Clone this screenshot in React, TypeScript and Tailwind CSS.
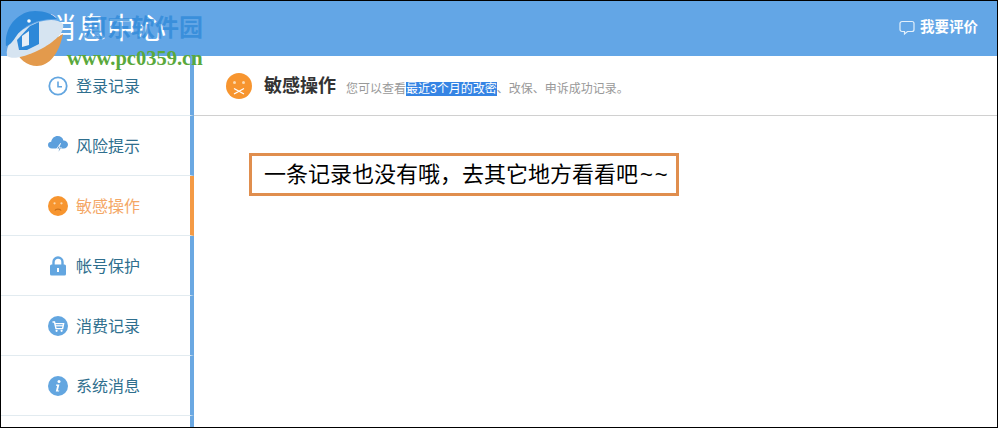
import React from 'react';

const FONT = "font-['Liberation_Sans','Noto_Sans_CJK_SC',sans-serif]";

const ClockIcon = () => (
  <svg width="20" height="20" viewBox="0 0 20 20" fill="none" stroke="#63a6e0">
    <circle cx="10" cy="10" r="8.7" strokeWidth="1.8" />
    <path d="M10 5.5V10.8H14" strokeWidth="1.6" />
  </svg>
);

const CloudIcon = () => (
  <svg width="20" height="22" viewBox="0 0 20 22">
    <path d="M4 13.5C1.8 13.5 0 12 0 10S1.6 6.8 3.2 6.8C3.8 3.4 6.4 1 9.6 1c3 0 5.2 1.8 5.8 4.4C18 5.4 20 7.2 20 9.6s-1.9 3.9-4.2 3.9Z" fill="#5c9fdc" />
    <path d="M12.4 8 8 14.2h2.6L8.6 20l5.4-7.4h-2.6l1.6-4.6Z" fill="#fff" />
    <path d="M11.6 10.2 9.4 13.4h2.2l-1.2 3.4 2.4-3.6h-2.2Z" fill="#3a7fbe" />
  </svg>
);

const SadFace = ({ size, scissors }: { size: number; scissors?: boolean }) => (
  <svg width={size} height={size} viewBox="0 0 26 26">
    <circle cx="13" cy="13" r="13" fill="#f7952f" />
    <circle cx="8.5" cy="9.5" r="1.5" fill="#fbd9ae" />
    <circle cx="17.5" cy="9.5" r="1.5" fill="#fbd9ae" />
    {scissors ? (
      <path d="M8 15.5 18 21M18 15.5 8 21" stroke="#fff" strokeWidth="1.3" fill="none" />
    ) : (
      <path d="M9 19c1-2.4 7-2.4 8 0" stroke="#c96f18" strokeWidth="1.6" fill="none" />
    )}
  </svg>
);

const LockIcon = () => (
  <svg width="18" height="20" viewBox="0 0 18 20">
    <path d="M4.5 9V6a4.5 4.5 0 0 1 9 0v3" stroke="#63a6e0" strokeWidth="2.4" fill="none" />
    <rect x="1" y="8.5" width="16" height="11" rx="1.5" fill="#63a6e0" />
    <rect x="8" y="12" width="2" height="4" fill="#fff" />
  </svg>
);

const CartIcon = () => (
  <svg width="20" height="20" viewBox="0 0 20 20">
    <circle cx="10" cy="10" r="10" fill="#63a6e0" />
    <path d="M4.5 6H6.5L8 12.6H14.6L15.6 7.6H7" stroke="#fff" strokeWidth="1.4" fill="none" />
    <path d="M7.3 9.8H15" stroke="#fff" strokeWidth="1.2" />
    <circle cx="8.6" cy="14.8" r="1.1" fill="#fff" />
    <circle cx="13.6" cy="14.8" r="1.1" fill="#fff" />
  </svg>
);

const InfoIcon = () => (
  <svg width="20" height="20" viewBox="0 0 20 20">
    <circle cx="10" cy="10" r="10" fill="#63a6e0" />
    <circle cx="11" cy="5.6" r="1.5" fill="#fff" />
    <path d="M8.2 8.6H11.4L9.9 14.4H11.4L11 15.6H7.8L9.2 9.8H7.9Z" fill="#fff" />
  </svg>
);

const CommentIcon = () => (
  <svg width="16" height="16" viewBox="0 0 16 16" fill="none" stroke="#e3f0fb" strokeWidth="1.2">
    <path d="M3 1.5H13A2 2 0 0 1 15 3.5V9.5A2 2 0 0 1 13 11.5H8.5L5.5 14V11.5H3A2 2 0 0 1 1 9.5V3.5A2 2 0 0 1 3 1.5Z" />
  </svg>
);

const LogoMark = () => (
  <svg width="60" height="56" viewBox="0 0 60 56">
    <path d="M8 36C14 50 22 56 32 56C44 56 54 44 58 24L34 38Z" fill="#e39a4c" />
    <path d="M2 46C0 36 8 24 24 16C38 9 52 8 58 14C60 22 50 32 34 40C20 47 7 50 2 46Z" fill="#d6e4f1" />
    <path d="M1 36C-1 16 14 1 30 1C40 1 48 4 52 9C36 8 18 14 10 28C7 33 3 36 1 36Z" fill="#2d88d8" />
    <path d="M12 30 25 16 34 12V34L22 40H14Z" fill="#2d88d8" />
    <path d="M17 26 24 21V35L17 37Z" fill="#e6eef6" />
    <circle cx="24" cy="11" r="1.8" fill="#fff" />
  </svg>
);

const menu = [
  { label: '登录记录', icon: <ClockIcon /> },
  { label: '风险提示', icon: <CloudIcon /> },
  { label: '敏感操作', icon: <SadFace size={20} />, active: true },
  { label: '帐号保护', icon: <LockIcon /> },
  { label: '消费记录', icon: <CartIcon /> },
  { label: '系统消息', icon: <InfoIcon /> },
];

export default function App() {
  return (
    <div className={`${FONT} relative w-[998px] h-[428px] overflow-hidden bg-white border border-black flex flex-col`}>
      {/* header */}
      <div className="h-[55px] shrink-0 bg-[#63a6e6] flex items-center justify-between pl-[46px] pr-[19px]">
        <span className="text-[29px] leading-none text-white tracking-[1px] mt-[1px]">消息中心</span>
        <div className="flex items-center gap-[5px] text-white text-[14.5px] font-bold -mt-[2px]">
          <CommentIcon />
          <span>我要评价</span>
        </div>
      </div>

      <div className="flex-1 flex min-h-0">
        {/* sidebar */}
        <div className="w-[193px] shrink-0 flex flex-col">
          {menu.map((item) => (
            <div
              key={item.label}
              className={`h-[60px] shrink-0 flex items-center pl-[47px] gap-[8px] border-b border-[#e2ebf0] border-r-4 ${
                item.active ? 'border-r-[#f49a45]' : 'border-r-[#6ba8e2]'
              }`}
            >
              <span className="w-[20px] flex justify-center">{item.icon}</span>
              <span className={`text-[16px] mt-[2px] ${item.active ? 'text-[#f4a766]' : 'text-[#2f6f8e]'}`}>{item.label}</span>
            </div>
          ))}
          <div className="flex-1 border-r-4 border-r-[#6ba8e2]" />
        </div>

        {/* content */}
        <div className="flex-1 min-w-0">
          <div className="h-[60px] flex items-center pl-[32px] border-b border-[#d0d0d0]">
            <SadFace size={26} scissors />
            <span className="ml-[12px] mt-[2px] text-[18px] font-bold text-[#333]">敏感操作</span>
            <span className="ml-[10px] mt-[6px] text-[12px] text-[#999]">
              您可以查看<span className="bg-[#3584e4] text-white">最近3个月的改密</span>、改保、申诉成功记录。
            </span>
          </div>
          <div className="pl-[55px] pt-[37px]">
            <div className="w-[430px] h-[43px] border-[3px] border-[#e08e4e] flex items-center pl-[12px] text-[22px] leading-none text-black whitespace-nowrap">
              一条记录也没有哦，去其它地方看看吧<span className="ml-[2px] tracking-[2px]">~~</span>
            </div>
          </div>
        </div>
      </div>

      {/* site watermark over the page, semi transparent so the title shows through */}
      <span className="absolute left-[82px] top-[15px] text-[24px] leading-none font-bold text-[#2d88d8]/75 whitespace-nowrap">
        河东软件园
      </span>
      <div className="absolute left-[4px] top-[9px]">
        <LogoMark />
      </div>
      <span className="absolute left-[66px] top-[47px] font-['Liberation_Serif',serif] text-[20.5px] leading-none font-bold text-[#5aa83c] whitespace-nowrap">
        www.pc0359.cn
      </span>
    </div>
  );
}
